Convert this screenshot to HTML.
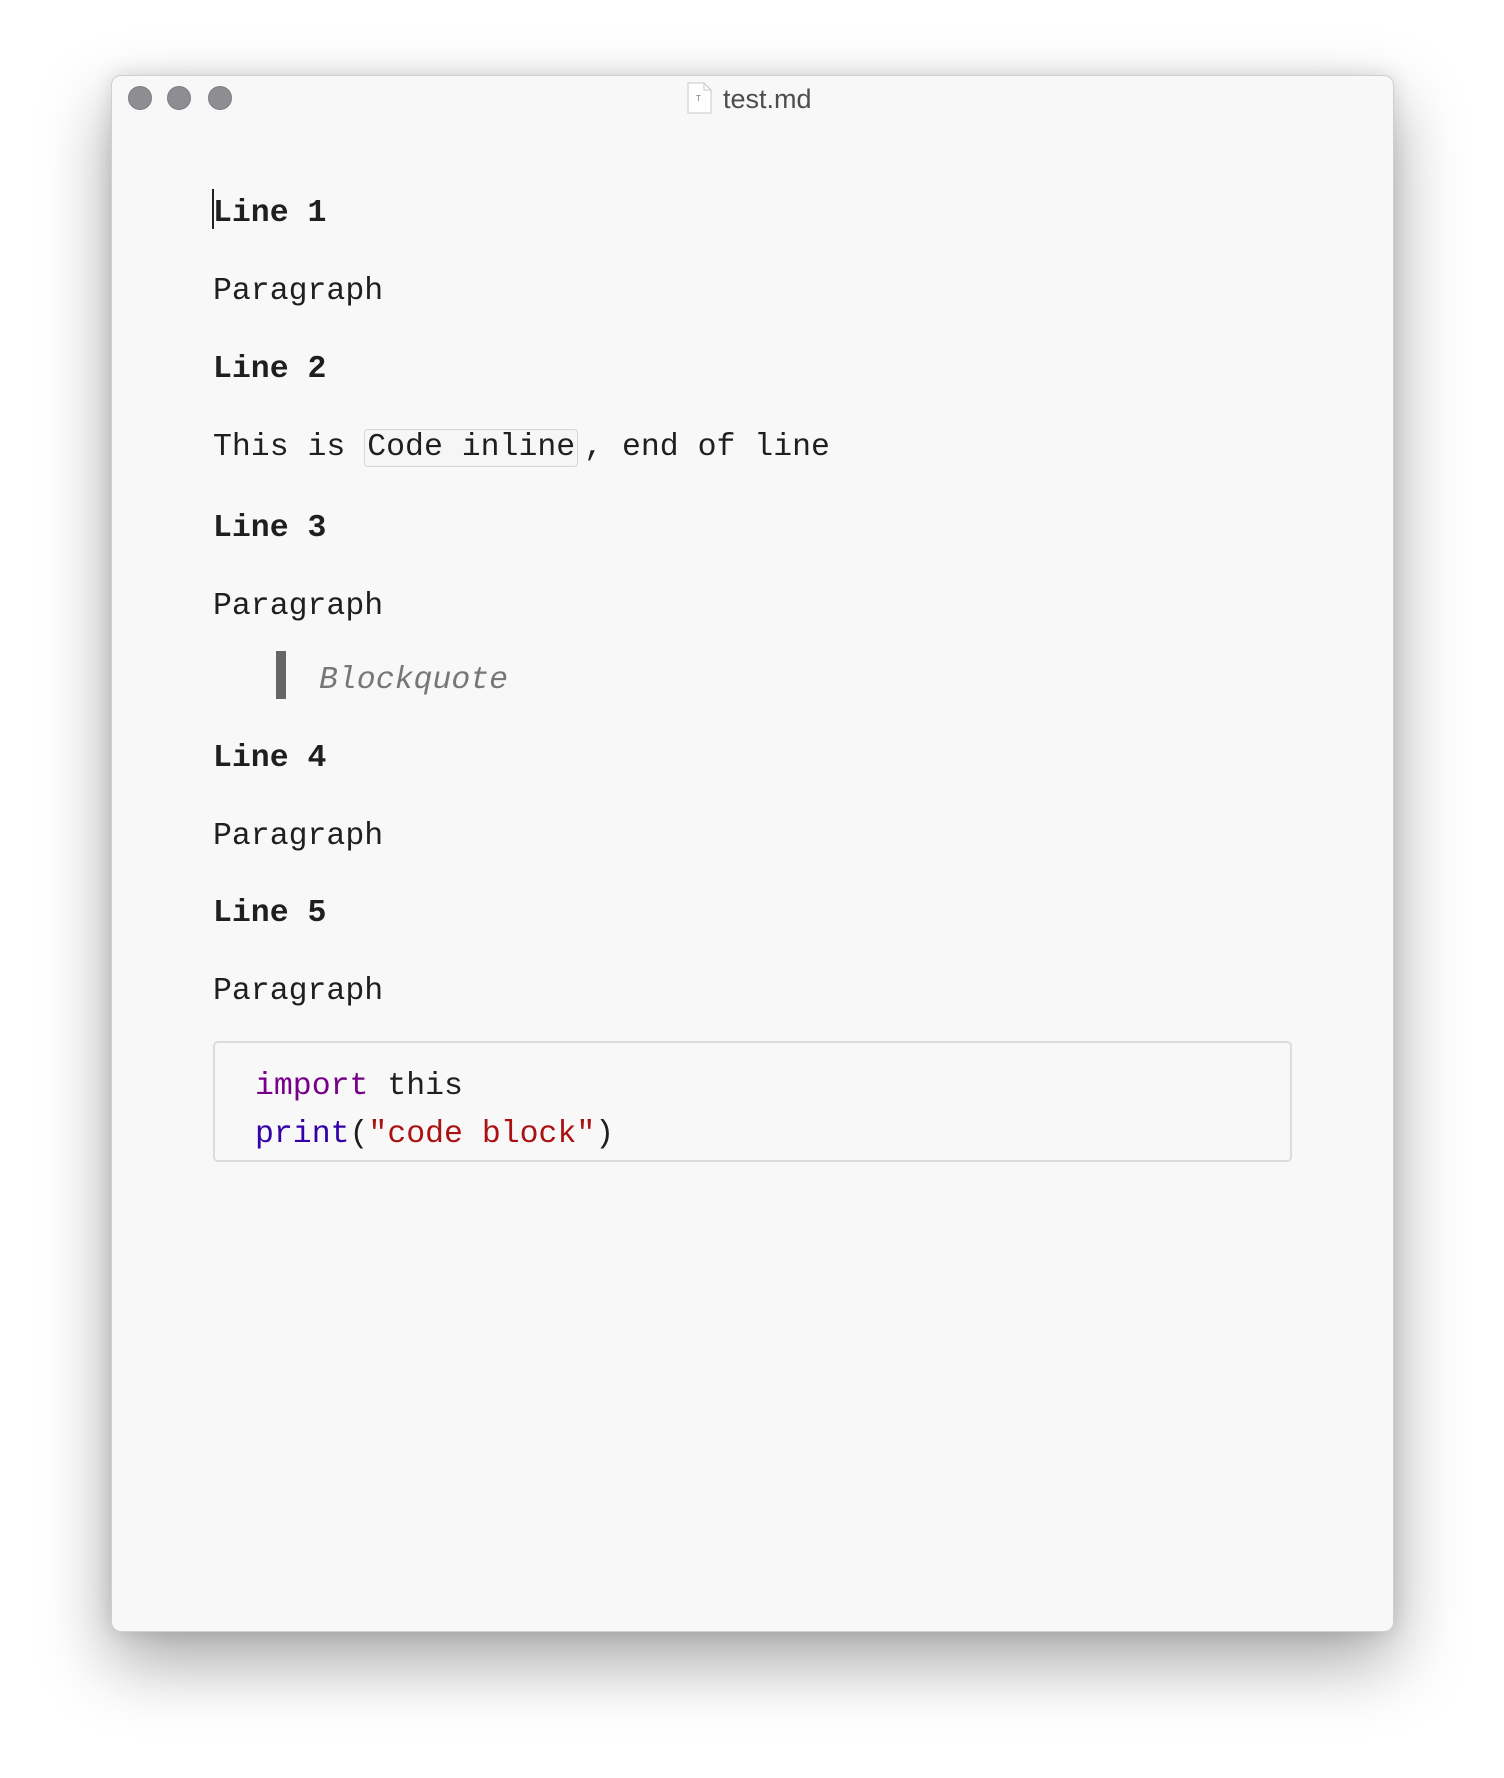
<!DOCTYPE html>
<html><head><meta charset="utf-8"><style>
html,body{margin:0;padding:0;background:#fff;width:1504px;height:1778px;overflow:hidden;position:relative}
.win{position:absolute;left:111px;top:75px;width:1283px;height:1557px;background:#f8f8f8;border-radius:10px;border:1px solid #cfcfcf;box-sizing:border-box;box-shadow:0 30px 70px rgba(0,0,0,0.35),0 0 20px rgba(0,0,0,0.12)}
.dot{position:absolute;top:86px;width:24px;height:24px;border-radius:50%;background:#8e8d92;border:1px solid #7d7c80;box-sizing:border-box}
.t{position:absolute;font-family:"Liberation Mono",monospace;font-size:31.5px;color:#1f1f1f;white-space:pre;line-height:1}
.b{font-weight:bold}
.title{position:absolute;left:723px;top:86px;font-family:"Liberation Sans",sans-serif;font-size:27px;color:#4d4d4d;line-height:1}
</style></head><body>
<div class="win"></div>
<div class="dot" style="left:128px"></div>
<div class="dot" style="left:167px"></div>
<div class="dot" style="left:208px"></div>
<svg style="position:absolute;left:687px;top:82px" width="25" height="32" viewBox="0 0 25 32"><path d="M1 1H17L24 8V31H1Z" fill="#fff" stroke="#c8c8c8"/><path d="M17 1V8H24" fill="none" stroke="#c8c8c8"/><text x="9" y="19" font-size="8" font-family="Liberation Sans" fill="#777">T</text></svg>
<div class="title">test.md</div>
<div style="position:absolute;left:212px;top:189px;width:2px;height:40px;background:#222"></div>
<div class="t b" style="left:213px;top:198px">Line 1</div>
<div class="t" style="left:213px;top:276px">Paragraph</div>
<div class="t b" style="left:213px;top:354px">Line 2</div>
<div class="t" style="left:213px;top:432px">This is <span style="display:inline-block;border:1px solid #d6d6d6;border-radius:4px;background:#f6f6f6;padding:0 2px;margin:-4px 6px -4px 0;line-height:36px;height:36px">Code inline</span>, end of line</div>
<div class="t b" style="left:213px;top:513px">Line 3</div>
<div class="t" style="left:213px;top:591px">Paragraph</div>
<div style="position:absolute;left:276px;top:651px;width:10px;height:48px;background:#666"></div>
<div class="t" style="left:319px;top:665px;font-style:italic;color:#777">Blockquote</div>
<div class="t b" style="left:213px;top:743px">Line 4</div>
<div class="t" style="left:213px;top:821px">Paragraph</div>
<div class="t b" style="left:213px;top:898px">Line 5</div>
<div class="t" style="left:213px;top:976px">Paragraph</div>
<div style="position:absolute;left:213px;top:1041px;width:1079px;height:121px;border:2px solid #dcdcdc;border-radius:5px;box-sizing:border-box;background:#f8f8f8"></div>
<div class="t" style="left:255px;top:1071px;font-size:31.5px"><span style="color:#770088">import</span> this</div>
<div class="t" style="left:255px;top:1119px;font-size:31.5px"><span style="color:#3300aa">print</span>(<span style="color:#aa1111">"code block"</span>)</div>
</body></html>
